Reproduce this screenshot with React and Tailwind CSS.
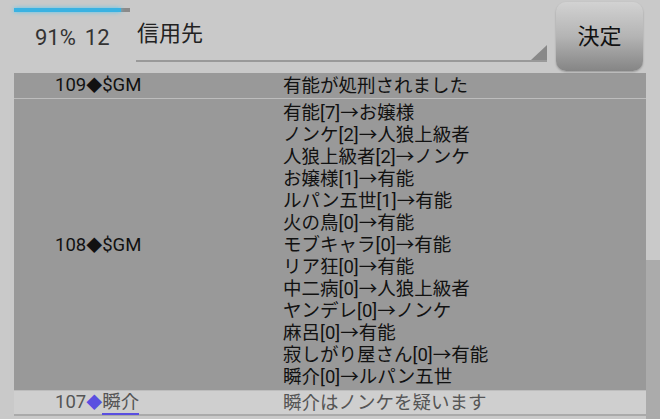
import React from "react";

const votes = [
  "有能[7]→お嬢様",
  "ノンケ[2]→人狼上級者",
  "人狼上級者[2]→ノンケ",
  "お嬢様[1]→有能",
  "ルパン五世[1]→有能",
  "火の鳥[0]→有能",
  "モブキャラ[0]→有能",
  "リア狂[0]→有能",
  "中二病[0]→人狼上級者",
  "ヤンデレ[0]→ノンケ",
  "麻呂[0]→有能",
  "寂しがり屋さん[0]→有能",
  "瞬介[0]→ルパン五世",
];

const App = () => {
  return (
    <div
      className="relative w-[660px] h-[419px] overflow-hidden bg-[#c9c9c9] text-[#111]"
      style={{ fontFamily: "Roboto, 'Noto Sans CJK JP', sans-serif" }}
    >
      {/* header */}
      <div className="flex h-[73px]">
        <div className="w-[136px] pl-[14px] pt-[8px]">
          <div className="flex w-[116px] h-[4px] bg-[#8a8a8a]">
            <div className="w-[107px] bg-[#3ab2e2] shadow-[0_0_4px_#5ac8f0]" />
          </div>
          <div className="mt-[12px] pl-[21px] text-[22px] leading-[28px] text-[#333]">
            91%<span className="ml-[9px]">12</span>
          </div>
        </div>
        <div className="relative w-[411px] h-[62px] border-b-2 border-[#999]">
          <div className="pt-[20px] pl-px text-[22px] leading-[28px] text-[#222]">
            信用先
          </div>
          <div className="absolute right-0 bottom-0 w-0 h-0 border-l-[16px] border-l-transparent border-b-[15px] border-b-[#888]" />
        </div>
        <div className="ml-[9px] mt-[2px] w-[87px] h-[69px] rounded-[10px] bg-gradient-to-b from-[#d2d2d2] via-[#b4b4b4] to-[#858585] shadow-[0_1px_2px_rgba(0,0,0,0.25)] flex items-center justify-center text-[22px] text-[#111]">
          決定
        </div>
      </div>

      {/* log */}
      <div className="ml-[14px] w-[632px] text-[18.5px] leading-[22px]">
        <div className="flex h-[25px] items-center bg-[#999]">
          <div className="w-[269px] pl-[41px]">
            109<span className="text-[16px]">◆</span>$GM
          </div>
          <div>有能が処刑されました</div>
        </div>
        <div className="h-px bg-[#bdbdbd]" />
        <div className="flex items-center bg-[#999] pt-[3px] pb-[2px]">
          <div className="w-[269px] pl-[41px]">
            108<span className="text-[16px]">◆</span>$GM
          </div>
          <div className="flex flex-col">
            {votes.map((v) => (
              <div key={v}>{v}</div>
            ))}
          </div>
        </div>
        <div className="h-px bg-[#bdbdbd]" />
        <div className="flex h-[23px] items-center bg-[#cfcfcf] text-[#555]">
          <div className="w-[269px] pl-[41px]">
            107<span className="text-[16px] text-[#5a4fe0]">◆</span>
            <span className="border-b-2 border-[#5a4fe0]">瞬介</span>
          </div>
          <div>瞬介はノンケを疑います</div>
        </div>
        <div className="h-[2px] bg-[#aaa]" />
      </div>

      {/* scroll thumb */}
      <div className="absolute right-0 top-[260px] bottom-0 w-[14px] bg-[#ababab]" />
    </div>
  );
};

export default App;
